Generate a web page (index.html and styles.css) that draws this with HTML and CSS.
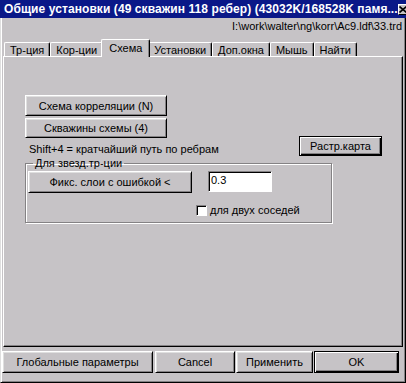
FILE: index.html
```html
<!DOCTYPE html>
<html lang="ru">
<head>
  <meta charset="UTF-8">
  <title>Общие установки</title>
  <link rel="stylesheet" href="styles.css">
</head>
<body>
  <div class="window">
    <div class="titlebar">
      <span class="title">Общие установки (49 скважин 118 ребер) (43032K/168528K памя...</span>
      <span class="close">
        <svg width="8" height="7" viewBox="0 0 8 7"><path d="M0.5 0.5 L7.5 6.5 M7.5 0.5 L0.5 6.5" stroke="#000" stroke-width="1.6"/></svg>
      </span>
    </div>
    <div class="frame">
      <div class="path">I:\work\walter\ng\korr\Ac9.ldf\33.trd</div>
      <div class="tabs">
        <div class="tab">Тр-ция</div>
        <div class="tab">Кор-ции</div>
        <div class="tab active">Схема</div>
        <div class="tab">Установки</div>
        <div class="tab">Доп.окна</div>
        <div class="tab">Мышь</div>
        <div class="tab">Найти</div>
      </div>
      <div class="panel">
        <div class="top-row">
          <div class="left-col">
            <button class="btn wide first">Схема корреляции (N)</button>
            <button class="btn wide">Скважины схемы (4)</button>
            <div class="hint">Shift+4 = кратчайший путь по ребрам</div>
          </div>
          <button class="btn default raster">Растр.карта</button>
        </div>
        <fieldset class="group">
          <legend>Для звезд.тр-ции</legend>
          <div class="group-row">
            <button class="btn fix">Фикс. слои с ошибкой &lt;</button>
            <div class="field">0.3</div>
          </div>
          <label class="check-row">
            <span class="checkbox"></span>
            <span>для двух соседей</span>
          </label>
        </fieldset>
      </div>
      <div class="footer">
        <button class="btn global">Глобальные параметры</button>
        <button class="btn cancel">Cancel</button>
        <button class="btn apply">Применить</button>
        <button class="btn default ok">OK</button>
      </div>
    </div>
  </div>
</body>
</html>
```

FILE: styles.css
```css
body {
  margin: 0;
  background: #c6c3c6;
  font-family: 'Liberation Sans', Arial, sans-serif;
  font-size: 11px;
  color: #000;
}
.window {
  width: 406px;
  height: 383px;
  display: flex;
  flex-direction: column;
  background: #c6c3c6;
}
.titlebar {
  height: 18px;
  flex-shrink: 0;
  box-sizing: border-box;
  padding: 0 6px 0 4px;
  background: #0a1888;
  color: #fff;
  display: flex;
  align-items: center;
  justify-content: space-between;
}
.title {
  font-weight: bold;
  font-size: 12px;
  letter-spacing: 0.08px;
  white-space: nowrap;
}
.close {
  width: 12px;
  height: 11px;
  box-sizing: border-box;
  background: #c6c3c6;
  border: 1px solid;
  border-color: #fff #000 #000 #fff;
  display: flex;
  align-items: center;
  justify-content: center;
}
.frame {
  flex: 1;
  display: flex;
  flex-direction: column;
  padding: 0 2px 2px 2px;
  border-left: 1px solid #dfdfdf;
  border-right: 1px solid #000;
  border-bottom: 1px solid #000;
  box-shadow: inset 1px 0 #fff, inset -1px -1px #848284;
}
.path {
  height: 16px;
  line-height: 16px;
  text-align: right;
  padding-right: 1px;
  white-space: nowrap;
}
.tabs {
  height: 23px;
  display: flex;
  align-items: flex-end;
  padding-left: 1px;
  margin-bottom: -1px;
}
.tab {
  height: 15px;
  box-sizing: border-box;
  padding: 0 5px;
  line-height: 14px;
  border-top: 1px solid #fff;
  border-left: 1px solid #fff;
  border-right: 1px solid #000;
  border-radius: 2px 2px 0 0;
  box-shadow: inset -1px 0 #848284;
  background: #c6c3c6;
}
.tab.active {
  height: 18px;
  line-height: 16px;
  margin: 0 -2px;
  padding: 0 7px;
  position: relative;
  z-index: 1;
}
.panel {
  height: 291px;
  box-sizing: border-box;
  padding: 38px 0 0 21px;
  border: 1px solid;
  border-color: #fff #000 #000 #fff;
  box-shadow: inset -1px -1px #848284;
}
.top-row {
  width: 357px;
  display: flex;
  justify-content: space-between;
  align-items: flex-end;
}
.left-col {
  display: flex;
  flex-direction: column;
  gap: 2px;
}
.btn {
  margin: 0;
  padding: 0;
  box-sizing: border-box;
  background: #c6c3c6;
  font-family: inherit;
  font-size: 11px;
  color: #000;
  border: 1px solid;
  border-color: #fff #000 #000 #fff;
  box-shadow: inset 1px 1px #dfdfdf, inset -1px -1px #848284;
}
.btn.default {
  border-color: #000;
  box-shadow: inset 1px 1px #fff, inset -1px -1px #000, inset -2px -2px #848284;
}
.btn.wide {
  width: 142px;
  height: 20px;
}
.btn.first {
  height: 21px;
}
.hint {
  margin-top: 2px;
  padding-left: 4px;
  line-height: 14px;
}
.btn.raster {
  width: 83px;
  height: 20px;
}
.group {
  width: 307px;
  box-sizing: border-box;
  margin: 1px 0 0;
  padding: 1px 2px 5px;
  border: 1px solid #848284;
  box-shadow: 1px 1px #fff, inset 1px 1px #fff;
}
.group legend {
  margin-left: 5px;
  padding: 0 2px;
  line-height: 13px;
}
.group-row {
  display: flex;
  align-items: flex-start;
}
.btn.fix {
  width: 164px;
  height: 22px;
  margin-right: 16px;
}
.field {
  width: 64px;
  height: 21px;
  box-sizing: border-box;
  padding: 2px 0 0 2px;
  background: #fff;
  border: 1px solid;
  border-color: #848284 #fff #fff #848284;
  box-shadow: inset 1px 1px #000;
}
.check-row {
  margin-top: 11px;
  padding-left: 168px;
  display: flex;
  align-items: center;
  gap: 3px;
  line-height: 13px;
}
.checkbox {
  width: 11px;
  height: 11px;
  box-sizing: border-box;
  background: #fff;
  border: 1px solid;
  border-color: #848284 #fff #fff #848284;
  box-shadow: inset 1px 1px #000;
}
.footer {
  margin: 4px 0 0 -1px;
  display: flex;
}
.footer .btn {
  height: 22px;
}
.btn.global {
  width: 151px;
  margin-right: 2px;
}
.btn.cancel {
  width: 80px;
  margin-right: 1px;
}
.btn.apply {
  width: 77px;
  margin-right: 1px;
}
.btn.ok {
  width: 85px;
}
```
